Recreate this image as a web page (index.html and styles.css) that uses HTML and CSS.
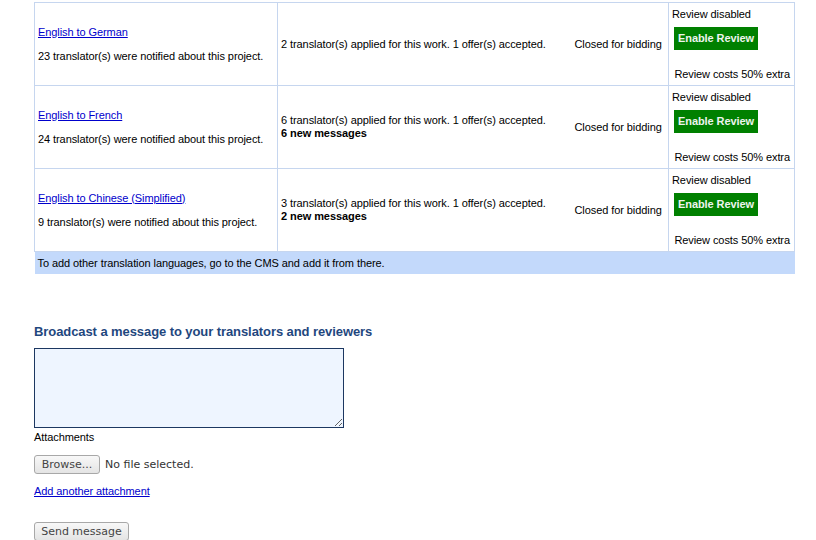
FILE: index.html
```html
<!DOCTYPE html>
<html>
<head>
<meta charset="utf-8">
<link rel="stylesheet" href="styles.css">
</head>
<body>
<div class="page">
  <table class="jobs">
    <colgroup>
      <col class="c1"><col class="c2"><col class="c3"><col class="c4">
    </colgroup>
    <tr>
      <td class="lang">
        <a href="#" class="link">English to German</a>
        <div class="notified">23 translator(s) were notified about this project.</div>
      </td>
      <td class="applied">2 translator(s) applied for this work. 1 offer(s) accepted.</td>
      <td class="status">Closed for bidding</td>
      <td class="review">
        <div class="rev-state">Review disabled</div>
        <div class="btn-green">Enable Review</div>
        <div class="rev-cost">Review costs 50% extra</div>
      </td>
    </tr>
    <tr>
      <td class="lang">
        <a href="#" class="link">English to French</a>
        <div class="notified">24 translator(s) were notified about this project.</div>
      </td>
      <td class="applied">6 translator(s) applied for this work. 1 offer(s) accepted.<br><b>6 new messages</b></td>
      <td class="status">Closed for bidding</td>
      <td class="review">
        <div class="rev-state">Review disabled</div>
        <div class="btn-green">Enable Review</div>
        <div class="rev-cost">Review costs 50% extra</div>
      </td>
    </tr>
    <tr>
      <td class="lang">
        <a href="#" class="link">English to Chinese (Simplified)</a>
        <div class="notified">9 translator(s) were notified about this project.</div>
      </td>
      <td class="applied">3 translator(s) applied for this work. 1 offer(s) accepted.<br><b>2 new messages</b></td>
      <td class="status">Closed for bidding</td>
      <td class="review">
        <div class="rev-state">Review disabled</div>
        <div class="btn-green">Enable Review</div>
        <div class="rev-cost">Review costs 50% extra</div>
      </td>
    </tr>
    <tr>
      <td class="note" colspan="4">To add other translation languages, go to the CMS and add it from there.</td>
    </tr>
  </table>

  <h3 class="bc-title">Broadcast a message to your translators and reviewers</h3>
  <textarea class="bc-text"></textarea>
  <div class="attach-label">Attachments</div>
  <div class="file-row">
    <span class="ff-btn">Browse...</span>
    <span class="file-none">No file selected.</span>
  </div>
  <a href="#" class="link add-att">Add another attachment</a>
  <div class="send-row"><span class="ff-btn send">Send message</span></div>
</div>
</body>
</html>
```

FILE: styles.css
```css
html, body {
  margin: 0;
  padding: 0;
  background: #ffffff;
}
body {
  font-family: "Liberation Sans", Arial, sans-serif;
  font-size: 11px;
  color: #000;
  letter-spacing: -0.08px;
}
.page {
  padding: 2px 0 0 34px;
}
.jobs {
  border-collapse: collapse;
  width: 760px;
  table-layout: fixed;
}
.jobs col.c1 { width: 243px; }
.jobs col.c2 { width: 293px; }
.jobs col.c3 { width: 98px; }
.jobs col.c4 { width: 126px; }
.jobs td {
  border: 1px solid #c6d6ef;
  height: 82px;
  padding: 0 3px;
  line-height: 13px;
  vertical-align: middle;
}
.jobs td.applied { border-right: none; }
.jobs td.status { border-left: none; padding-left: 4px; padding-right: 2px; white-space: nowrap; }
.jobs td.review { vertical-align: top; padding: 0 4px 0 3px; }
.link {
  color: #0000cc;
  text-decoration: underline;
}
.notified {
  margin-top: 11px;
}
.rev-state {
  margin-top: 5px;
}
.btn-green {
  margin: 6px 0 0 2px;
  width: 84px;
  height: 23px;
  line-height: 23px;
  background: #008000;
  color: #eef4ee;
  font-weight: bold;
  text-align: center;
}
.rev-cost {
  margin-top: 18px;
  text-align: right;
}
.jobs td.note {
  height: 22px;
  background: #c3d9fb;
  border: none;
  padding: 0 3px;
  line-height: 22px;
  vertical-align: middle;
}
.bc-title {
  margin: 50px 0 0 0;
  font-size: 13px;
  line-height: 16px;
  font-weight: bold;
  color: #1f477e;
}
.bc-text {
  display: block;
  margin: 8px 0 0 0;
  width: 310px;
  height: 80px;
  box-sizing: border-box;
  border: 1px solid #1c3761;
  background: #eef5ff;
  padding: 2px;
  resize: both;
}
.attach-label {
  margin-top: 3px;
  line-height: 13px;
}
.file-row {
  margin-top: 11px;
  display: flex;
  align-items: center;
  height: 18px;
}
.ff-btn {
  display: inline-block;
  box-sizing: border-box;
  height: 19px;
  line-height: 17px;
  padding: 0 8px;
  border: 1px solid #a8a8a8;
  border-radius: 3px;
  background: linear-gradient(#f8f8f8, #e4e4e4);
  font-family: "DejaVu Sans", sans-serif;
  font-size: 11px;
  letter-spacing: 0;
  color: #444;
}
.file-row .ff-btn { width: 66px; text-align: center; padding: 0; }
.file-none {
  margin-left: 5px;
  font-family: "DejaVu Sans", sans-serif;
  font-size: 11px;
  letter-spacing: 0;
  color: #333;
}
.add-att {
  display: inline-block;
  margin-top: 12px;
  line-height: 13px;
}
.send-row {
  margin-top: 24px;
}
.ff-btn.send { width: 95px; text-align: center; padding: 0; }
```
